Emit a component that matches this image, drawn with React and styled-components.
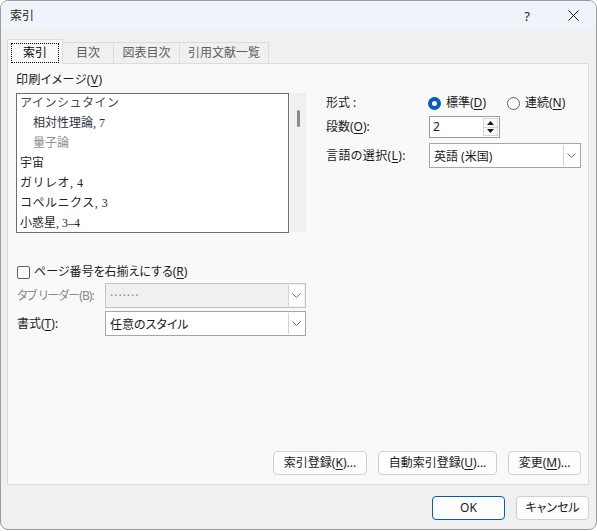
import React from "react";
import styled, { createGlobalStyle } from "styled-components";

const GlobalStyle = createGlobalStyle`
  html, body {
    margin: 0;
    padding: 0;
    background: #ffffff;
  }
  body {
    font-family: "Noto Sans", "Noto Sans CJK JP", sans-serif;
    font-size: 12px;
    color: #1a1a1a;
    font-feature-settings: "palt";
  }
  u {
    text-underline-offset: 2px;
  }
`;

const Window = styled.div`
  width: 597px;
  height: 530px;
  box-sizing: border-box;
  border: 1px solid #9c9c9c;
  border-radius: 8px;
  overflow: hidden;
  background: #f0f0f0;
  display: flex;
  flex-direction: column;
`;

const TitleBar = styled.div`
  height: 29px;
  flex: none;
  background: #eef4f9;
  display: flex;
  align-items: center;
  padding-left: 9px;
`;

const TitleText = styled.div`
  flex: 1;
  font-size: 12px;
  line-height: 16px;
`;

const TitleButton = styled.div`
  width: 46px;
  height: 29px;
  display: flex;
  align-items: center;
  justify-content: center;
  font-size: 13px;
  color: #222;
`;

const Body = styled.div`
  flex: 1;
  display: flex;
  flex-direction: column;
  padding: 9px 7px 9px 6px;
`;

const TabRow = styled.div`
  height: 24px;
  display: flex;
  align-items: flex-end;
  position: relative;
  z-index: 1;
`;

const Tab = styled.div`
  box-sizing: border-box;
  width: ${(p) => p.$w}px;
  height: ${(p) => (p.$active ? 25 : 21)}px;
  margin-bottom: ${(p) => (p.$active ? -1 : 0)}px;
  background: ${(p) => (p.$active ? "#f9f9f9" : "#f0f0f0")};
  border: 1px solid #dcdcdc;
  border-bottom: none;
  border-left: ${(p) => (p.$first ? "1px solid #dcdcdc" : "none")};
  display: flex;
  align-items: ${(p) => (p.$active ? "flex-start" : "center")};
  justify-content: ${(p) => (p.$active ? "flex-start" : "center")};
  padding: ${(p) => (p.$active ? "3px 0 0 3px" : "0")};
  color: ${(p) => (p.$active ? "#000" : "#5c5c5c")};
  line-height: 16px;
`;

const FocusRing = styled.div`
  box-sizing: border-box;
  width: 48px;
  height: 20px;
  border: 1px dotted #000;
  display: flex;
  align-items: center;
  justify-content: center;
`;

const Pane = styled.div`
  box-sizing: border-box;
  height: 422px;
  flex: none;
  background: #f9f9f9;
  border: 1px solid #dcdcdc;
  display: flex;
  flex-direction: column;
`;

const TopSection = styled.div`
  display: flex;
  padding: 8px 0 0 8px;
`;

const LeftCol = styled.div`
  width: 290px;
  display: flex;
  flex-direction: column;
`;

const Label = styled.div`
  line-height: 16px;
  white-space: nowrap;
  color: ${(p) => (p.$disabled ? "#8a8a8a" : "#1a1a1a")};
  width: ${(p) => (p.$w ? `${p.$w}px` : "auto")};
  letter-spacing: ${(p) => p.$ls || 0}px;
  flex: none;
`;

const PreviewWrap = styled.div`
  margin-top: 5px;
  display: flex;
  gap: 1px;
  height: 140px;
`;

const Preview = styled.div`
  box-sizing: border-box;
  width: 273px;
  height: 140px;
  border: 1px solid #6e6e6e;
  background: #ffffff;
  overflow: hidden;
  padding: 0 0 0 3px;
  font-family: "Liberation Serif", "Noto Sans CJK JP", serif;
  font-feature-settings: normal;
`;

const PreviewLine = styled.div`
  height: 20px;
  line-height: 19px;
  font-size: 12px;
  white-space: nowrap;
  padding-left: ${(p) => (p.$indent ? 13 : 0)}px;
  color: ${(p) => p.$color};
  letter-spacing: ${(p) => (p.$spaced ? "0.5px" : "0")};
`;

const ScrollTrack = styled.div`
  width: 16px;
  height: 139px;
  background: #f0f0f0;
  display: flex;
  justify-content: center;
  padding-top: 17px;
  box-sizing: border-box;
`;

const ScrollThumb = styled.div`
  width: 3px;
  height: 17px;
  border-radius: 1.5px;
  background: #8a8a8a;
`;

const RightCol = styled.div`
  margin-left: 20px;
  padding-top: 21px;
  display: flex;
  flex-direction: column;
`;

const FormRow = styled.div`
  display: flex;
  align-items: center;
  height: ${(p) => p.$h}px;
  margin-top: ${(p) => p.$mt || 0}px;
`;

const RadioGroup = styled.div`
  display: flex;
  align-items: center;
  margin-left: -1px;
`;

const RadioItem = styled.label`
  display: flex;
  align-items: center;
  gap: 5px;
  margin-right: ${(p) => p.$mr || 0}px;
  line-height: 16px;
`;

const RadioCircle = styled.span`
  box-sizing: border-box;
  width: 13px;
  height: 13px;
  border-radius: 50%;
  background: ${(p) => (p.$checked ? "#005fb8" : "#ffffff")};
  border: ${(p) => (p.$checked ? "none" : "1px solid #5f5f5f")};
  display: flex;
  align-items: center;
  justify-content: center;
  &::after {
    content: "";
    display: ${(p) => (p.$checked ? "block" : "none")};
    width: 5px;
    height: 5px;
    border-radius: 50%;
    background: #ffffff;
  }
`;

const SpinBox = styled.div`
  box-sizing: border-box;
  width: 71px;
  height: 22px;
  border: 1px solid #9a9a9a;
  background: #ffffff;
  display: flex;
`;

const SpinValue = styled.div`
  flex: 1;
  padding-left: 3px;
  line-height: 20px;
`;

const SpinButtons = styled.div`
  width: 15px;
  display: flex;
  flex-direction: column;
  padding: 1px 1px 1px 0;
`;

const SpinButton = styled.div`
  flex: 1;
  box-sizing: border-box;
  border: 1px solid #d6d6d6;
  border-top: ${(p) => (p.$down ? "none" : "1px solid #d6d6d6")};
  background: #fbfbfb;
  display: flex;
  align-items: center;
  justify-content: center;
`;

const Combo = styled.div`
  box-sizing: border-box;
  width: ${(p) => p.$w}px;
  height: 25px;
  border: 1px solid ${(p) => (p.$disabled ? "#c4c4c4" : "#a6a6a6")};
  background: ${(p) => (p.$disabled ? "#f0f0f0" : "#ffffff")};
  display: flex;
  align-items: stretch;
`;

const ComboText = styled.div`
  flex: 1;
  padding-left: 4px;
  display: flex;
  align-items: center;
  color: ${(p) => (p.$disabled ? "#8a8a8a" : "#1a1a1a")};
  letter-spacing: ${(p) => (p.$disabled ? "1px" : "0")};
`;

const ComboButton = styled.div`
  width: 16px;
  margin: 1px;
  margin-left: 0;
  box-sizing: border-box;
  border-left: 1px solid #d4d4d4;
  background: #ffffff;
  display: flex;
  align-items: center;
  justify-content: center;
`;

const LowerSection = styled.div`
  padding-left: 9px;
  display: flex;
  flex-direction: column;
`;

const CheckRow = styled.label`
  display: flex;
  align-items: center;
  gap: 4px;
  height: 16px;
  margin-top: 31px;
  line-height: 16px;
`;

const CheckBox = styled.span`
  box-sizing: border-box;
  width: 13px;
  height: 13px;
  border: 1px solid #5f5f5f;
  border-radius: 2px;
  background: #ffffff;
`;

const Spacer = styled.div`
  flex: 1;
`;

const ButtonRow = styled.div`
  display: flex;
  justify-content: flex-end;
  gap: 11px;
  padding: 0 7px ${(p) => p.$pb || 0}px 0;
  margin-top: ${(p) => p.$mt || 0}px;
`;

const Button = styled.div`
  box-sizing: border-box;
  width: ${(p) => p.$w}px;
  height: 24px;
  border-radius: 4px;
  border: 1px solid ${(p) => (p.$primary ? "#005fb8" : "#d0d0d0")};
  background: #fdfdfd;
  display: flex;
  align-items: center;
  justify-content: center;
  line-height: 16px;
  white-space: nowrap;
`;

const FooterRow = styled(ButtonRow)`
  padding-right: 0;
`;

const Chevron = () => (
  <svg width="9" height="5" viewBox="0 0 9 5">
    <path d="M0.5 0.5 L4.5 4.5 L8.5 0.5" fill="none" stroke="#6a6a6a" strokeWidth="1" />
  </svg>
);

const Triangle = ({ down }) => (
  <svg width="7" height="4" viewBox="0 0 7 4">
    <path d={down ? "M0 0 L7 0 L3.5 4 Z" : "M0 4 L7 4 L3.5 0 Z"} fill="#1a1a1a" />
  </svg>
);

const CloseIcon = () => (
  <svg width="11" height="11" viewBox="0 0 11 11">
    <path d="M0.5 0.5 L10.5 10.5 M10.5 0.5 L0.5 10.5" stroke="#1a1a1a" strokeWidth="1" />
  </svg>
);

const previewLines = [
  { text: "アインシュタイン", color: "#4a4a4a", spaced: true },
  { text: "相対性理論, 7", color: "#2a3040", indent: true },
  { text: "量子論", color: "#8a8f99", indent: true },
  { text: "宇宙", color: "#1f2430" },
  { text: "ガリレオ, 4", color: "#1f2430", spaced: true },
  { text: "コペルニクス, 3", color: "#1f2430", spaced: true },
  { text: "小惑星, 3–4", color: "#1f2430" },
];

const tabs = [
  { label: "索引", w: 56, active: true },
  { label: "目次", w: 51 },
  { label: "図表目次", w: 66 },
  { label: "引用文献一覧", w: 89 },
];

export default function App() {
  return (
    <>
      <GlobalStyle />
      <Window>
        <TitleBar>
          <TitleText>索引</TitleText>
          <TitleButton>?</TitleButton>
          <TitleButton>
            <CloseIcon />
          </TitleButton>
        </TitleBar>
        <Body>
          <TabRow>
            {tabs.map((t, i) => (
              <Tab key={t.label} $w={t.w} $active={t.active} $first={i === 0}>
                {t.active ? <FocusRing>{t.label}</FocusRing> : t.label}
              </Tab>
            ))}
          </TabRow>
          <Pane>
            <TopSection>
              <LeftCol>
                <Label $ls={0.4}>
                  印刷イメージ(<u>V</u>)
                </Label>
                <PreviewWrap>
                  <Preview>
                    {previewLines.map((l) => (
                      <PreviewLine key={l.text} $indent={l.indent} $color={l.color} $spaced={l.spaced}>
                        {l.text}
                      </PreviewLine>
                    ))}
                  </Preview>
                  <ScrollTrack>
                    <ScrollThumb />
                  </ScrollTrack>
                </PreviewWrap>
              </LeftCol>
              <RightCol>
                <FormRow $h={20}>
                  <Label $w={103}>形式 :</Label>
                  <RadioGroup>
                    <RadioItem $mr={21}>
                      <RadioCircle $checked />
                      <span>
                        標準(<u>D</u>)
                      </span>
                    </RadioItem>
                    <RadioItem>
                      <RadioCircle />
                      <span>
                        連続(<u>N</u>)
                      </span>
                    </RadioItem>
                  </RadioGroup>
                </FormRow>
                <FormRow $h={22} $mt={3}>
                  <Label $w={103}>
                    段数(<u>O</u>):
                  </Label>
                  <SpinBox>
                    <SpinValue>2</SpinValue>
                    <SpinButtons>
                      <SpinButton>
                        <Triangle />
                      </SpinButton>
                      <SpinButton $down>
                        <Triangle down />
                      </SpinButton>
                    </SpinButtons>
                  </SpinBox>
                </FormRow>
                <FormRow $h={25} $mt={5}>
                  <Label $w={103} $ls={0.4}>
                    言語の選択(<u>L</u>):
                  </Label>
                  <Combo $w={152}>
                    <ComboText>英語 (米国)</ComboText>
                    <ComboButton>
                      <Chevron />
                    </ComboButton>
                  </Combo>
                </FormRow>
              </RightCol>
            </TopSection>
            <LowerSection>
              <CheckRow>
                <CheckBox />
                <span>
                  ページ番号を右揃えにする(<u>R</u>)
                </span>
              </CheckRow>
              <FormRow $h={25} $mt={3}>
                <Label $w={88} $disabled $ls={-0.9}>
                  タブ リーダー(B):
                </Label>
                <Combo $w={201} $disabled>
                  <ComboText $disabled>·······</ComboText>
                  <ComboButton>
                    <Chevron />
                  </ComboButton>
                </Combo>
              </FormRow>
              <FormRow $h={25} $mt={3}>
                <Label $w={88}>
                  書式(<u>T</u>):
                </Label>
                <Combo $w={201}>
                  <ComboText>任意のスタイル</ComboText>
                  <ComboButton>
                    <Chevron />
                  </ComboButton>
                </Combo>
              </FormRow>
            </LowerSection>
            <Spacer />
            <ButtonRow $pb={9}>
              <Button $w={94}>
                索引登録(<u>K</u>)...
              </Button>
              <Button $w={119}>
                自動索引登録(<u>U</u>)...
              </Button>
              <Button $w={73}>
                変更(<u>M</u>)...
              </Button>
            </ButtonRow>
          </Pane>
          <FooterRow $mt={11}>
            <Button $w={73} $primary>
              OK
            </Button>
            <Button $w={73}>キャンセル</Button>
          </FooterRow>
        </Body>
      </Window>
    </>
  );
}
